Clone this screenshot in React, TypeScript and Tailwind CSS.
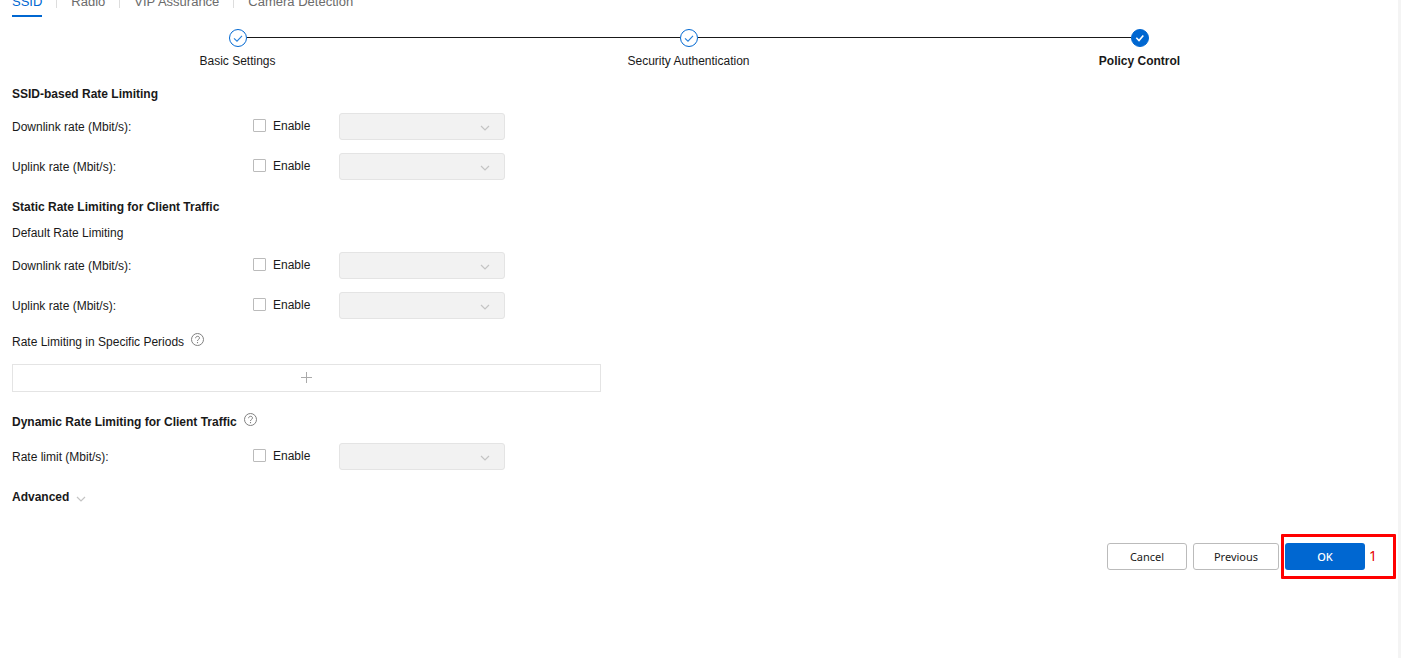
import { useState } from "react";

function Tick({ strong = false }: { strong?: boolean }) {
  return (
    <svg className="block size-[18px]" viewBox="0 0 18 18" fill="none" aria-hidden="true">
      <circle cx="9" cy="9" r="8.5" stroke="#0067d1" fill={strong ? "#0067d1" : "#ffffff"} />
      {strong ? (
        <path d="M5.3 8.8 L8 11.6 L12.3 6.4" stroke="#ffffff" strokeWidth="1.6" />
      ) : (
        <path d="M5 9.3 L8 12.2 L13 6.8" stroke="#2680dc" strokeWidth="1.1" />
      )}
    </svg>
  );
}

function Chevron({ className = "" }: { className?: string }) {
  return (
    <svg className={className} viewBox="0 0 10 6" width="10" height="6" fill="none" aria-hidden="true">
      <path d="M1 1 L5 5 L9 1" stroke="#c4c4c4" strokeWidth="1.2" />
    </svg>
  );
}

function Help({ label }: { label: string }) {
  return (
    <button type="button" aria-label={label} className="mb-1 block">
      <svg className="block size-[13px]" viewBox="0 0 13 13" fill="none" aria-hidden="true">
        <circle cx="6.5" cy="6.5" r="6" stroke="#808080" />
        <path d="M4.6 5.2 C4.6 2.7 8.5 2.7 8.5 5 C8.5 6.4 6.5 6.3 6.5 8" stroke="#808080" />
        <path d="M6.5 9 V10.2" stroke="#808080" strokeWidth="1.1" />
      </svg>
    </button>
  );
}

function RateRow({ id, label }: { id: string; label: string }) {
  const [enabled, setEnabled] = useState(false);
  return (
    <div className="grid h-[27px] grid-cols-[241px_86px_166px] items-center">
      <label htmlFor={`${id}-rate`}>{label}</label>
      <label className="flex items-center gap-[7px] pb-0.5">
        <input
          type="checkbox"
          checked={enabled}
          onChange={(e) => setEnabled(e.target.checked)}
          className="size-[13px] appearance-none rounded-[1px] border border-[#bbbbbb] bg-white checked:bg-[#0067d1]"
        />
        Enable
      </label>
      <div className="relative">
        <select
          id={`${id}-rate`}
          disabled={!enabled}
          className="block h-[27px] w-full appearance-none rounded-[3px] border border-[#e4e4e4] bg-[#f2f2f2] px-2"
        />
        <Chevron className="pointer-events-none absolute top-3 right-[15px]" />
      </div>
    </div>
  );
}

const tabs = ["SSID", "Radio", "VIP Assurance", "Camera Detection"];
const steps = ["Basic Settings", "Security Authentication", "Policy Control"];

export default function App() {
  return (
    <div className="flex min-h-screen overflow-hidden bg-white font-['Liberation_Sans',Arial,sans-serif] text-[12px] leading-4 text-[#191919]">
      <main className="min-w-0 flex-1 pr-[33px] pl-3">
        <nav className="-mt-2 flex divide-x divide-[#dddddd] text-[13px]">
          {tabs.map((tab, i) => (
            <div key={tab} className="mb-[9px] h-4 px-3.5 first:pl-0">
              <a
                href="#"
                className={
                  i === 0
                    ? "block h-[25px] border-b-2 border-[#0067d1] text-[#0067d1] leading-5"
                    : "block text-[#6b6b6b] leading-5"
                }
              >
                {tab}
              </a>
            </div>
          ))}
        </nav>

        <ol className="mt-3 grid grid-cols-3">
          {steps.map((step, i) => (
            <li key={step} className="text-center">
              <div className="flex items-center">
                <span className={i === 0 ? "h-px flex-1" : "mb-px h-px flex-1 bg-[#191919]"} />
                <Tick strong={i === 2} />
                <span className={i === 2 ? "h-px flex-1" : "mb-px h-px flex-1 bg-[#191919]"} />
              </div>
              <p className={i === 2 ? "mt-1.5 font-bold" : "mt-1.5"}>{step}</p>
            </li>
          ))}
        </ol>

        <section className="mt-[17px]">
          <h2 className="font-bold">SSID-based Rate Limiting</h2>
          <div className="mt-[11px] grid gap-[13px]">
            <RateRow id="ssid-down" label="Downlink rate (Mbit/s):" />
            <RateRow id="ssid-up" label="Uplink rate (Mbit/s):" />
          </div>
        </section>

        <section className="mt-[19px]">
          <h2 className="font-bold">Static Rate Limiting for Client Traffic</h2>
          <h3 className="mt-2.5">Default Rate Limiting</h3>
          <div className="mt-[11px] grid gap-[13px]">
            <RateRow id="static-down" label="Downlink rate (Mbit/s):" />
            <RateRow id="static-up" label="Uplink rate (Mbit/s):" />
          </div>
          <div className="mt-3.5 flex items-center gap-[7px]">
            <h3>Rate Limiting in Specific Periods</h3>
            <Help label="About rate limiting periods" />
          </div>
          <button
            type="button"
            aria-label="Add period"
            className="mt-3.5 flex h-7 w-full max-w-[589px] items-center justify-center border border-[#e4e4e4] pb-px"
          >
            <svg className="size-[13px]" viewBox="0 0 13 13" aria-hidden="true">
              <path d="M6.5 1 V12 M1 6.5 H12" stroke="#aaaaaa" />
            </svg>
          </button>
        </section>

        <section className="mt-[21px]">
          <div className="flex items-center gap-[7px]">
            <h2 className="font-bold">Dynamic Rate Limiting for Client Traffic</h2>
            <Help label="About dynamic rate limiting" />
          </div>
          <div className="mt-[13px]">
            <RateRow id="dynamic" label="Rate limit (Mbit/s):" />
          </div>
        </section>

        <button type="button" className="mt-[19px] flex items-center gap-[7px] font-bold">
          Advanced
          <Chevron className="mt-1" />
        </button>

        <footer className="mt-[38px] flex justify-end gap-1.5 font-['Noto_Sans',sans-serif] text-[11px]">
          <button type="button" className="h-[27px] w-20 rounded-[3px] border border-[#bbbbbb]">
            Cancel
          </button>
          <button type="button" className="h-[27px] w-[86px] rounded-[3px] border border-[#bbbbbb]">
            Previous
          </button>
          <div className="relative">
            <button type="button" className="h-[27px] w-20 rounded-[3px] bg-[#0067d1] font-medium text-white">
              OK
            </button>
            <div className="pointer-events-none absolute -top-[9px] -left-1 flex h-[45px] w-[115px] items-center justify-end rounded-[1px] border-3 border-[#ff0000] pr-4 pb-0.5 text-[14px] text-[#e60000]">
              1
            </div>
          </div>
        </footer>
      </main>
      <div className="w-[3px] bg-[#f4f4f4]" />
    </div>
  );
}
